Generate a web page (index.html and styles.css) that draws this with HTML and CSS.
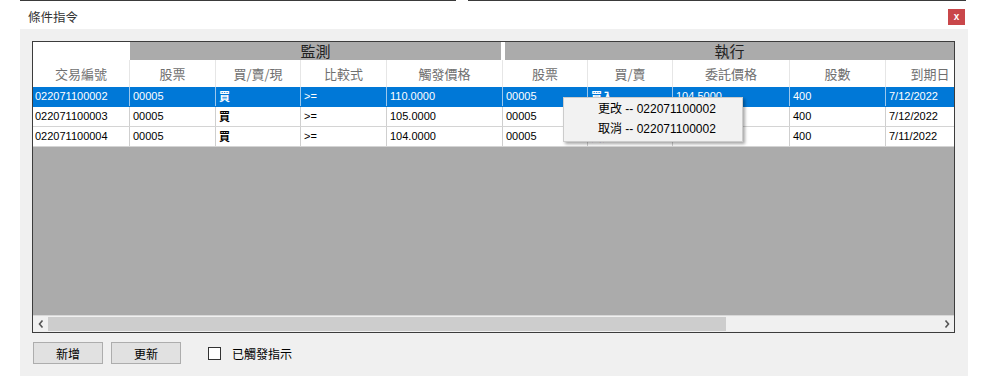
FILE: index.html
```html
<!DOCTYPE html>
<html lang="zh-Hant">
<head>
    <meta charset="UTF-8">
    <meta name="viewport" content="width=device-width, initial-scale=1.0">
    <title>條件指令</title>
    <link rel="stylesheet" href="styles.css">
</head>
<body>
    <div class="window">
        <div class="top-edge">
            <span class="edge-left"></span>
            <span class="edge-right"></span>
        </div>

        <div class="title-bar">
            <span class="title">條件指令</span>
            <button class="close-btn">x</button>
        </div>

        <div class="panel">
            <div class="grid">
                <div class="group-row">
                    <div class="group-blank"></div>
                    <div class="group monitor">監測</div>
                    <div class="group execute">執行</div>
                </div>

                <div class="row header-row">
                    <div class="cell c1">交易編號</div>
                    <div class="cell c2">股票</div>
                    <div class="cell c3">買/賣/現</div>
                    <div class="cell c4">比較式</div>
                    <div class="cell c5">觸發價格</div>
                    <div class="cell c6">股票</div>
                    <div class="cell c7">買/賣</div>
                    <div class="cell c8">委託價格</div>
                    <div class="cell c9">股數</div>
                    <div class="cell c10">到期日</div>
                </div>

                <div class="row data-row selected">
                    <div class="cell c1">022071100002</div>
                    <div class="cell c2">00005</div>
                    <div class="cell c3">買</div>
                    <div class="cell c4">&gt;=</div>
                    <div class="cell c5">110.0000</div>
                    <div class="cell c6">00005</div>
                    <div class="cell c7">買入</div>
                    <div class="cell c8">104.5000</div>
                    <div class="cell c9">400</div>
                    <div class="cell c10">7/12/2022</div>
                </div>
                <div class="row data-row">
                    <div class="cell c1">022071100003</div>
                    <div class="cell c2">00005</div>
                    <div class="cell c3">買</div>
                    <div class="cell c4">&gt;=</div>
                    <div class="cell c5">105.0000</div>
                    <div class="cell c6">00005</div>
                    <div class="cell c7">買入</div>
                    <div class="cell c8">105.0000</div>
                    <div class="cell c9">400</div>
                    <div class="cell c10">7/12/2022</div>
                </div>
                <div class="row data-row">
                    <div class="cell c1">022071100004</div>
                    <div class="cell c2">00005</div>
                    <div class="cell c3">買</div>
                    <div class="cell c4">&gt;=</div>
                    <div class="cell c5">104.0000</div>
                    <div class="cell c6">00005</div>
                    <div class="cell c7">買入</div>
                    <div class="cell c8">100.0000</div>
                    <div class="cell c9">400</div>
                    <div class="cell c10">7/11/2022</div>
                </div>

                <div class="fill"></div>

                <div class="hscroll">
                    <div class="arrow">
                        <svg width="6" height="8" viewBox="0 0 6 8"><polyline points="4.5,0.5 1.5,4 4.5,7.5" fill="none" stroke="#555" stroke-width="1.6"/></svg>
                    </div>
                    <div class="thumb"></div>
                    <div class="track"></div>
                    <div class="arrow">
                        <svg width="6" height="8" viewBox="0 0 6 8"><polyline points="1.5,0.5 4.5,4 1.5,7.5" fill="none" stroke="#555" stroke-width="1.6"/></svg>
                    </div>
                </div>

                <div class="context-menu">
                    <div class="menu-item">更改 -- 022071100002</div>
                    <div class="menu-item">取消 -- 022071100002</div>
                </div>
            </div>

            <div class="actions">
                <button class="btn">新增</button>
                <button class="btn">更新</button>
                <label class="check">
                    <span class="box"></span>
                    <span>已觸發指示</span>
                </label>
            </div>
        </div>
    </div>
</body>
</html>
```

FILE: styles.css
```css
body {
    margin: 0;
    background-color: #fff;
    font-family: "Liberation Sans", "Noto Sans CJK TC", sans-serif;
    font-size: 12px;
    color: #000;
}

.window {
    width: 948px;
    margin-left: 20px;
}

.top-edge {
    display: flex;
    height: 1px;
}

.edge-left {
    width: 436px;
    background-color: #3a3a3a;
}

.edge-right {
    width: 498px;
    margin-left: 12px;
    background-color: #3a3a3a;
}

.title-bar {
    display: flex;
    justify-content: space-between;
    align-items: flex-start;
    height: 28px;
    box-sizing: border-box;
    padding: 8px 3px 0 8px;
    background-color: #fff;
}

.title {
    font-family: "Noto Sans CJK TC", sans-serif;
    font-size: 12.5px;
    line-height: 16px;
    color: #333;
}

.close-btn {
    width: 17px;
    height: 16px;
    padding: 0;
    border: none;
    background-color: #c9474a;
    color: #fff;
    font-family: "Liberation Sans", sans-serif;
    font-size: 10px;
    font-weight: bold;
    line-height: 14px;
}

.panel {
    height: 347px;
    box-sizing: border-box;
    padding: 12px 13px 0 12px;
    background-color: #f0f0f0;
}

.grid {
    position: relative;
    width: 923px;
    height: 292px;
    box-sizing: border-box;
    border: 1px solid #3c3c3c;
    display: flex;
    flex-direction: column;
    background-color: #ababab;
    overflow: hidden;
}

.group-row {
    display: flex;
    height: 18px;
    background-color: #fff;
    font-family: "Noto Sans CJK TC", sans-serif;
    font-size: 15px;
    line-height: 18px;
    color: #222;
}

.group-blank {
    width: 97px;
}

.group {
    box-sizing: border-box;
    background-color: #ababab;
    text-align: center;
}

.monitor {
    width: 373px;
    border-right: 2px solid #fff;
}

.execute {
    flex: 1;
    border-left: 2px solid #fff;
}

.row {
    display: flex;
    background-color: #fff;
}

.cell {
    flex: none;
    box-sizing: border-box;
    border-right: 1px solid #cfcfcf;
    white-space: nowrap;
    overflow: hidden;
}

.c1 { width: 97px; }
.c2 { width: 86px; }
.c3 { width: 85px; }
.c4 { width: 86px; }
.c5 { width: 116px; }
.c6 { width: 85px; }
.c7 { width: 85px; }
.c8 { width: 117px; }
.c9 { width: 96px; }
.c10 { width: 68px; border-right: none; }

.header-row {
    height: 27px;
    font-family: "Noto Sans CJK TC", sans-serif;
    font-size: 13px;
    line-height: 27px;
    color: #707070;
}

.header-row .cell {
    text-align: center;
    border-right-color: #e6e6e6;
}

.header-row .c10 {
    padding-left: 20px;
}

.data-row {
    height: 20px;
    box-sizing: border-box;
    border-bottom: 1px solid #d4d4d4;
    font-size: 11px;
    line-height: 19px;
}

.data-row .cell {
    padding-left: 3px;
}

.data-row .c1 {
    padding-left: 2px;
}

.data-row .c3,
.data-row .c7 {
    font-family: "Noto Sans CJK TC", sans-serif;
    font-weight: bold;
    font-size: 11px;
}

.selected {
    background-color: #0078d7;
    color: #fff;
    border-bottom-color: #0078d7;
}

.selected .cell {
    border-right-color: #9cc7ec;
}

.fill {
    flex: 1;
    background-color: #ababab;
}

.hscroll {
    display: flex;
    height: 16px;
    border-top: 1px solid #d8d8d8;
    background-color: #f0f0f0;
}

.arrow {
    width: 15px;
    display: flex;
    align-items: center;
    justify-content: center;
}

.thumb {
    width: 678px;
    margin: 1px 0;
    background-color: #cdcdcd;
}

.track {
    flex: 1;
}

.context-menu {
    position: absolute;
    left: 530px;
    top: 55px;
    width: 180px;
    height: 45px;
    box-sizing: border-box;
    padding-top: 1px;
    border: 1px solid #cccccc;
    background-color: #f2f2f2;
    box-shadow: 2px 2px 3px rgba(0, 0, 0, 0.35);
    color: #000;
    font-family: "Liberation Sans", "Noto Sans CJK TC", sans-serif;
    font-size: 12px;
}

.menu-item {
    height: 20px;
    line-height: 20px;
    padding-left: 34px;
}

.actions {
    display: flex;
    align-items: center;
    margin-top: 9px;
    margin-left: 1px;
}

.btn {
    width: 70px;
    height: 22px;
    margin-right: 8px;
    padding: 0;
    border: 1px solid #adadad;
    background-color: #e1e1e1;
    font-family: "Noto Sans CJK TC", sans-serif;
    font-size: 12px;
    color: #000;
}

.check {
    display: flex;
    align-items: center;
    margin-left: 19px;
    font-family: "Noto Sans CJK TC", sans-serif;
    font-size: 12px;
}

.box {
    width: 13px;
    height: 13px;
    box-sizing: border-box;
    border: 1px solid #333;
    background-color: #fff;
    margin-right: 11px;
}
```
